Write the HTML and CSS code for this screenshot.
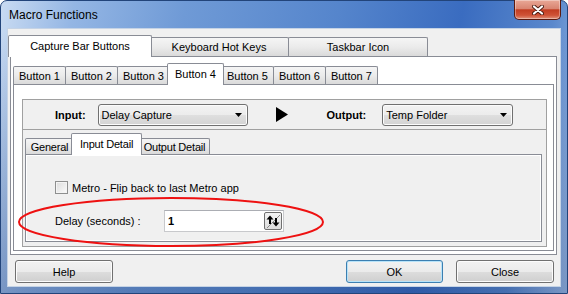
FILE: index.html
```html
<!DOCTYPE html>
<html lang="en">
<head>
    <meta charset="UTF-8">
    <title>Macro Functions</title>
    <link rel="stylesheet" href="styles.css">
</head>
<body>
    <div class="window">
        <!-- Title bar -->
        <div class="titlebar">
            <span class="title">Macro Functions</span>
            <div class="close-btn">
                <svg width="12" height="10" viewBox="0 0 12 10">
                    <path d="M2 1.5L10 8.5M10 1.5L2 8.5" stroke="#4b1c12" stroke-width="4" stroke-linecap="round"/>
                    <path d="M2 1.5L10 8.5M10 1.5L2 8.5" stroke="#fff" stroke-width="2.2" stroke-linecap="round"/>
                </svg>
            </div>
        </div>

        <div class="client">
            <!-- Top level tabs -->
            <div class="tabctl">
                <div class="tabs main-tabs">
                    <div class="tab wide active">Capture Bar Buttons</div>
                    <div class="tab wide">Keyboard Hot Keys</div>
                    <div class="tab wide">Taskbar Icon</div>
                </div>
                <div class="panel main-panel">
                    <div class="tabs button-tabs">
                        <div class="tab">Button 1</div>
                        <div class="tab">Button 2</div>
                        <div class="tab">Button 3</div>
                        <div class="tab active">Button 4</div>
                        <div class="tab">Button 5</div>
                        <div class="tab">Button 6</div>
                        <div class="tab">Button 7</div>
                    </div>
                    <div class="panel button-panel">
                        <div class="group">
                            <div class="io-row">
                                <span class="io-label">Input:</span>
                                <div class="combo input-combo">
                                    <span>Delay Capture</span>
                                    <svg width="7" height="4" viewBox="0 0 7 4"><path d="M0 0H7L3.5 4Z"/></svg>
                                </div>
                                <svg class="play" width="12" height="15" viewBox="0 0 12 15"><path d="M0 0L12 7.5L0 15Z"/></svg>
                                <span class="io-label output-label">Output:</span>
                                <div class="combo output-combo">
                                    <span>Temp Folder</span>
                                    <svg width="7" height="4" viewBox="0 0 7 4"><path d="M0 0H7L3.5 4Z"/></svg>
                                </div>
                            </div>

                            <div class="sub-tabctl">
                                <div class="tabs sub-tabs">
                                    <div class="tab small general">General</div>
                                    <div class="tab small input-detail active">Input Detail</div>
                                    <div class="tab small output-detail">Output Detail</div>
                                </div>
                                <div class="panel detail-panel">
                                    <div class="check-row">
                                        <span class="checkbox"></span>
                                        <span>Metro - Flip back to last Metro app</span>
                                    </div>
                                    <div class="delay-row">
                                        <span class="delay-label">Delay (seconds) :</span>
                                        <div class="spin-input">
                                            <span class="value">1</span>
                                            <div class="spin-btn">
                                                <svg width="16" height="16" viewBox="0 0 16 16">
                                                    <path d="M2 15L15 2" stroke="#8a8a8a" stroke-width="1"/>
                                                    <path d="M5 4V11" stroke="#000" stroke-width="2"/>
                                                    <path d="M1.5 6.5L5 2.5L8.5 6.5Z"/>
                                                    <path d="M11 5V12" stroke="#000" stroke-width="2"/>
                                                    <path d="M7.5 9.5L11 13.5L14.5 9.5Z"/>
                                                </svg>
                                            </div>
                                        </div>
                                    </div>
                                </div>
                            </div>
                        </div>
                    </div>
                </div>
            </div>

            <!-- Dialog buttons -->
            <div class="buttons">
                <div class="btn">Help</div>
                <div class="btn default">OK</div>
                <div class="btn close">Close</div>
            </div>
        </div>

        <!-- Red hand-drawn highlight -->
        <svg class="highlight" width="568" height="294" viewBox="0 0 568 294">
            <ellipse cx="171" cy="222" rx="152" ry="24" fill="none" stroke="#ee1111" stroke-width="2"/>
        </svg>
    </div>
</body>
</html>
```

FILE: styles.css
```css
* {
    box-sizing: border-box;
}

body {
    margin: 0;
    font-family: "Liberation Sans", Arial, sans-serif;
    font-size: 11px;
    color: #000;
    background: #fff;
}

/* Window frame */
.window {
    position: relative;
    width: 568px;
    height: 294px;
    display: flex;
    flex-direction: column;
    padding: 0 6px 6px 6px;
    border: 1px solid #22447a;
    border-radius: 7px 7px 0 0;
    background:
        linear-gradient(to bottom, rgba(20, 50, 110, 0) 30px, rgba(20, 50, 110, 0.3) 100%),
        linear-gradient(100deg, #c9dbf2 0%, #94b6e4 12%, #6f9ad6 30%, #5585cc 55%, #3a6cc0 75%, #5a88cc 90%, #a7c3ea 100%);
}

.titlebar {
    height: 27px;
    display: flex;
    align-items: flex-start;
}

.title {
    font-size: 12px;
    line-height: 16px;
    padding: 6px 0 0 2px;
}

.close-btn {
    margin-left: auto;
    margin-top: -1px;
    width: 47px;
    height: 20px;
    display: flex;
    align-items: center;
    justify-content: center;
    border: 1px solid #5b1a10;
    border-top: none;
    border-radius: 0 0 5px 5px;
    background: linear-gradient(#e9a897, #d98571 45%, #c23d22 52%, #cf5236 80%, #e0937c);
    box-shadow: inset 0 0 0 1px rgba(255, 255, 255, 0.35);
}

.client {
    flex: 1;
    display: flex;
    flex-direction: column;
    padding: 6px 3px 0 2px;
    background: #f0f0f0;
    border: 1px solid #c5d3e5;
}

/* Tabs */
.tabs {
    display: flex;
    align-items: flex-end;
    height: 21px;
}

.tab {
    height: 19px;
    padding: 0 6px;
    display: flex;
    align-items: center;
    justify-content: center;
    white-space: nowrap;
    border: 1px solid #898c95;
    border-bottom: none;
    border-radius: 2px 2px 0 0;
    background: linear-gradient(#f5f5f5, #ebebeb 50%, #dadada);
}

.tab + .tab {
    margin-left: -1px;
}

.tab.active {
    position: relative;
    z-index: 1;
    height: 22px;
    margin: 0 -2px -1px -2px;
    padding: 0 8px 2px 8px;
    background: #fff;
}

.tab + .tab.active {
    margin-left: -3px;
}

.tab.wide {
    width: 140px;
}

.tab.wide.active {
    width: 144px;
}

.button-tabs .tab {
    height: 18px;
    padding: 0 5px;
}

.button-tabs .tab.active {
    height: 22px;
    padding: 0 7px 2px 7px;
}

.sub-tabs .tab.small {
    height: 16px;
    padding: 0;
    letter-spacing: -0.2px;
}

.sub-tabs .tab.small.active {
    height: 22px;
    padding: 0 0 2px 0;
}

.tab.general {
    width: 49px;
}

.tab.input-detail {
    width: 71px;
}

.tab.output-detail {
    width: 71px;
}

.panel {
    border: 1px solid #898c95;
}

.main-panel {
    height: 199px;
    padding: 6px 2px 3px 2px;
    background: #fff;
}

.button-panel {
    height: 167px;
    padding: 14px 6px 3px 8px;
    background: #fff;
}

.group {
    height: 148px;
    border: 1px solid #a0a0a0;
    background: #f0f0f0;
}

/* Input / output selectors */
.io-row {
    height: 30px;
    display: flex;
    align-items: center;
    padding-left: 32px;
    border-bottom: 1px solid #a0a0a0;
}

.io-label {
    font-weight: bold;
    margin-right: 12px;
}

.output-label {
    margin-left: 39px;
    margin-right: 16px;
}

.combo {
    height: 22px;
    display: flex;
    align-items: center;
    justify-content: space-between;
    padding: 0 5px 0 3px;
    border: 1px solid #707070;
    border-radius: 3px;
    background: linear-gradient(#f3f3f3, #ececec 50%, #dfdfdf 51%, #d3d3d3);
    box-shadow: inset 0 0 0 1px #fcfcfc;
}

.input-combo {
    width: 150px;
}

.output-combo {
    width: 131px;
}

.play {
    margin-left: 28px;
}

/* Detail tabs */
.sub-tabctl {
    margin-top: 3px;
    padding: 0 4px 0 2px;
}

.detail-panel {
    height: 88px;
    padding: 26px 0 0 29px;
    background: #f0f0f0;
    box-shadow: inset 1px 1px 0 #fff, inset -1px -1px 0 #fff;
}

.check-row {
    height: 13px;
    display: flex;
    align-items: center;
}

.checkbox {
    width: 13px;
    height: 13px;
    margin-right: 4px;
    border: 1px solid #8e8f8f;
    background: linear-gradient(135deg, #dcdcdc, #fbfbfb);
    box-shadow: inset 0 0 0 1px #f4f4f4;
}

.delay-row {
    margin-top: 16px;
    display: flex;
    align-items: center;
}

.delay-label {
    width: 109px;
}

.spin-input {
    width: 120px;
    height: 22px;
    display: flex;
    align-items: center;
    justify-content: space-between;
    padding: 0 1px 0 3px;
    border: 1px solid #c8c9cc;
    border-top-color: #abadb3;
    background: #fff;
}

.value {
    font-weight: bold;
}

.spin-btn {
    width: 18px;
    height: 18px;
    display: flex;
    align-items: center;
    justify-content: center;
    border: 1px solid #707070;
    border-radius: 2px;
    background: linear-gradient(#f3f3f3, #dcdcdc);
}

/* Dialog buttons */
.buttons {
    display: flex;
    margin-top: 5px;
    padding: 0 3px 0 5px;
}

.btn {
    width: 98px;
    height: 23px;
    display: flex;
    align-items: center;
    justify-content: center;
    border: 1px solid #707070;
    border-radius: 3px;
    background: linear-gradient(#f2f2f2, #ebebeb 50%, #dddddd 51%, #cfcfcf);
    box-shadow: inset 0 0 0 1px #fcfcfc;
}

.btn.default {
    width: 97px;
    margin-left: auto;
    border-color: #3c7fb1;
    box-shadow: inset 0 0 0 1px #b7e3f9;
}

.btn.close {
    margin-left: 13px;
}

/* Annotation */
.highlight {
    position: absolute;
    top: -1px;
    left: -1px;
    pointer-events: none;
}
```
